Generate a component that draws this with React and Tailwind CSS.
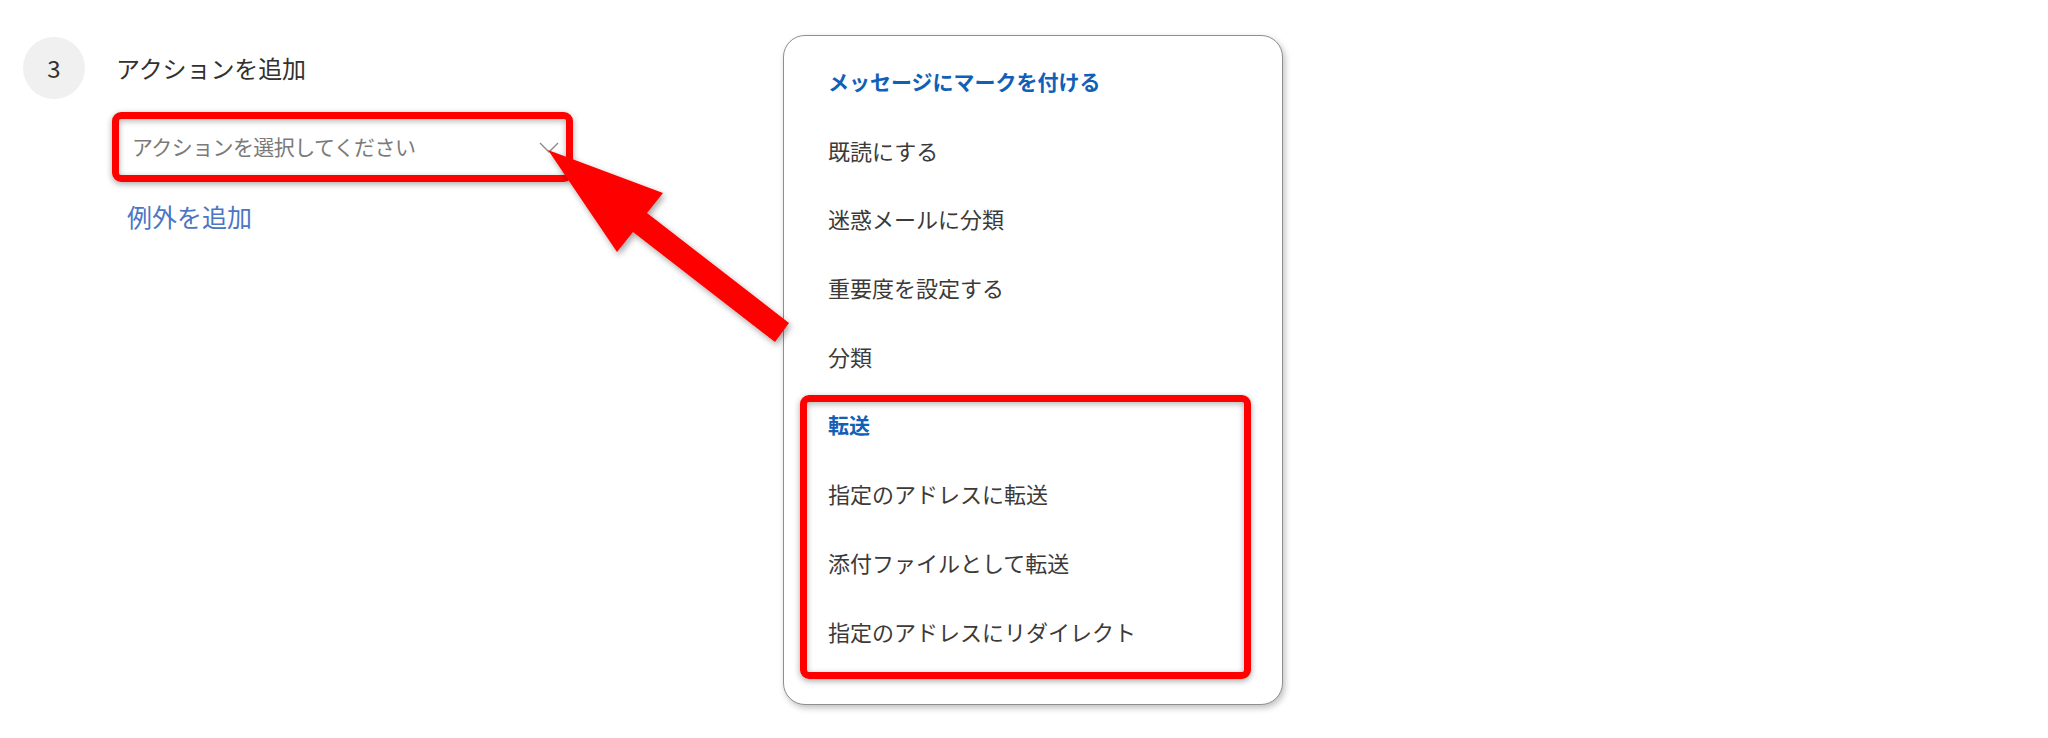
const font = { fontFamily: '"Noto Sans CJK JP", "Noto Sans", sans-serif' };

const menuRows = [
    { label: 'メッセージにマークを付ける', header: true },
    { label: '既読にする' },
    { label: '迷惑メールに分類' },
    { label: '重要度を設定する' },
    { label: '分類' },
    { label: '転送', header: true },
    { label: '指定のアドレスに転送' },
    { label: '添付ファイルとして転送' },
    { label: '指定のアドレスにリダイレクト' },
];

const Chevron = () => (
    <svg width="20" height="11" viewBox="0 0 20 11" fill="none">
        <path d="M1 1l9 9 9-9" stroke="#8a8886" strokeWidth="1.3" />
    </svg>
);

const Arrow = () => (
    <svg className="absolute inset-0 pointer-events-none" width="2048" height="738" viewBox="0 0 2048 738">
        <defs>
            <filter id="arrowShadow" x="-20%" y="-20%" width="140%" height="140%">
                <feDropShadow dx="2" dy="3" stdDeviation="3" floodColor="#000" floodOpacity="0.35" />
            </filter>
        </defs>
        <polygon
            points="548,150 663,193 647,213 789,323 775,342 633,232 617,252"
            fill="#ff0000"
            filter="url(#arrowShadow)"
        />
    </svg>
);

export default function App() {
    return (
        <div className="relative w-[2048px] h-[738px] bg-white flex overflow-hidden" style={font}>
            {/* left: action step */}
            <div className="w-[783px] pl-[23px] pt-[37px]">
                <div className="flex items-center gap-[31px]">
                    <div className="w-[62px] h-[62px] rounded-full bg-[#f0f0f0] flex items-center justify-center text-[24px] text-[#323130]">
                        3
                    </div>
                    <div className="text-[24px] text-[#323130] tracking-[-0.1px]">アクションを追加</div>
                </div>
                <div className="ml-[89px] mt-[13px] w-[461px] h-[70px] border-[7px] border-[#ff0000] rounded-[9px] shadow-[0_2px_6px_rgba(0,0,0,0.35),inset_0_2px_6px_rgba(0,0,0,0.3)] flex items-center justify-between pl-[13px] pr-[7px]">
                    <span className="text-[21px] text-[#7a7a7a] tracking-[-0.6px]">アクションを選択してください</span>
                    <Chevron />
                </div>
                <div className="ml-[104px] mt-[16px] text-[25px] text-[#4a76c4]">例外を追加</div>
            </div>

            {/* dropdown menu */}
            <div className="relative mt-[35px] w-[500px] h-[670px] border border-[#8f8f8f] rounded-[22px] bg-white shadow-[2px_3px_6px_rgba(0,0,0,0.25)] pt-[11px] pl-[44px]">
                {menuRows.map((row) => (
                    <div
                        key={row.label}
                        className={`h-[68.75px] flex items-center ${row.header ? 'text-[21px] font-bold text-[#1160b7]' : 'text-[22px] text-[#3b3a39]'}`}
                    >
                        {row.label}
                    </div>
                ))}
                <div className="absolute left-[16px] top-[359px] w-[451px] h-[284px] border-[7px] border-[#ff0000] rounded-[9px] shadow-[0_2px_6px_rgba(0,0,0,0.35),inset_0_2px_6px_rgba(0,0,0,0.3)]"></div>
            </div>

            <Arrow />
        </div>
    );
}
